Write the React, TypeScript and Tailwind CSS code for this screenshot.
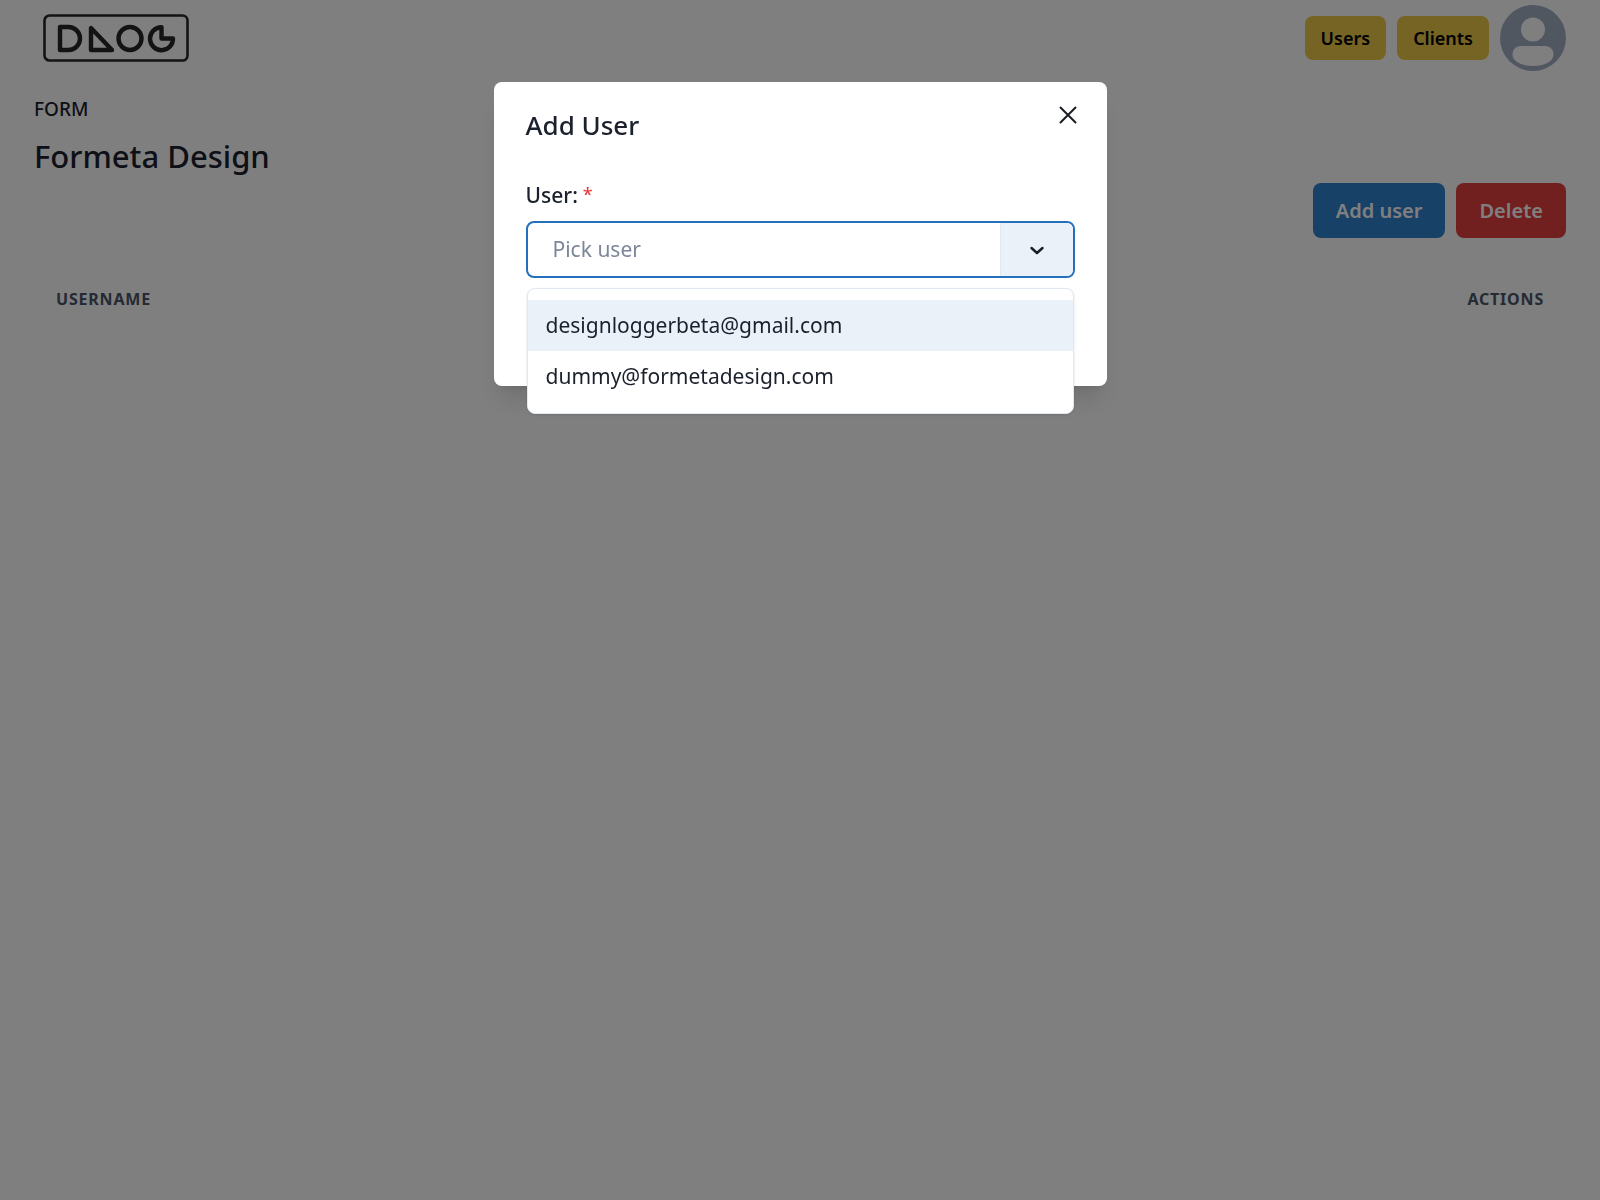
import { useState } from "react";

const users = ["designloggerbeta@gmail.com", "dummy@formetadesign.com"];

function Logo() {
  return (
    <svg viewBox="0 0 146 48" className="h-12 w-[146px]" fill="none" stroke="#262626" aria-hidden="true">
      <rect x="1.5" y="1.5" width="143" height="45" rx="5" strokeWidth="2.6" />
      <g strokeWidth="4.4" strokeLinejoin="round">
        <path d="M17 13H25.5A11.500 11.500 0 0 1 25.5 36H17Z" />
        <path d="M48 14V36H69Z" />
        <circle cx="87" cy="24.500" r="11.500" />
        <path d="M118.500 13.200A11.500 11.500 0 1 0 130 24.500H118.500Z" />
      </g>
    </svg>
  );
}

function Avatar() {
  return (
    <button type="button" aria-label="Account" className="size-[66px] rounded-full">
      <svg viewBox="0 0 66 66" className="size-full" aria-hidden="true">
        <circle cx="33" cy="33" r="33" fill="#a0aec0" />
        <circle cx="33" cy="24.500" r="12" fill="#fff" />
        <path
          d="M21 41H45C50 41 53.500 44.500 53.500 49.500C53.500 56.500 44 61 33 61S12.500 56.500 12.500 49.500C12.500 44.500 16 41 21 41Z"
          fill="#fff"
        />
      </svg>
    </button>
  );
}

function Header() {
  return (
    <header className="flex h-[76px] items-center justify-between pr-[34px] pl-[43px]">
      <a href="#home" aria-label="DLOG">
        <Logo />
      </a>
      <nav className="flex items-center gap-[11px]">
        <button type="button" className="h-11 rounded-lg bg-[#ecc94b] px-4 text-[18px] font-semibold text-black">
          Users
        </button>
        <button type="button" className="h-11 rounded-lg bg-[#ecc94b] px-4 text-[18px] font-semibold text-black">
          Clients
        </button>
        <Avatar />
      </nav>
    </header>
  );
}

function UserSelect() {
  const [value, setValue] = useState("");
  return (
    <div className="relative">
      <div className="flex h-[57px] overflow-hidden rounded-lg border-2 border-[#2470bd] bg-white">
        <input
          id="user"
          role="combobox"
          aria-expanded="true"
          aria-controls="user-options"
          value={value}
          onChange={(e) => setValue(e.target.value)}
          placeholder="Pick user"
          className="min-w-0 flex-1 pt-px pl-[25px] text-[21px] outline-none placeholder:text-[#7c8799]"
        />
        <button
          type="button"
          aria-label="Show users"
          className="flex w-[73px] items-center justify-center border-l border-[#e2e8f0] bg-[#ebf1f8]"
        >
          <svg viewBox="0 0 24 24" className="size-6" fill="none" stroke="#1a1d24" strokeWidth="2.4" strokeLinecap="round" strokeLinejoin="round" aria-hidden="true">
            <path d="M6.500 10l5.500 5 5.500-5" />
          </svg>
        </button>
      </div>
      <ul
        id="user-options"
        role="listbox"
        aria-label="Users"
        className="absolute inset-x-px top-full mt-[10px] rounded-lg border border-[#e2e8f0] bg-white py-[11px] shadow-sm"
      >
        {users.map((user, i) => (
          <li
            key={user}
            role="option"
            aria-selected={i === 0}
            onClick={() => setValue(user)}
            className="flex h-[51px] items-center px-[18px] text-[21px] aria-selected:bg-[#ebf1f8]"
          >
            {user}
          </li>
        ))}
      </ul>
    </div>
  );
}

function AddUserDialog() {
  return (
    <div className="fixed inset-0 flex items-start justify-center bg-black/50 px-4 pt-[82px]">
      <section
        role="dialog"
        aria-modal="true"
        aria-labelledby="dialog-title"
        className="relative w-full max-w-[613px] rounded-lg bg-white px-8 pt-6 pb-[108px] shadow-xl"
      >
        <h2 id="dialog-title" className="text-[26px] leading-[38px] font-medium text-[#1a202c]">
          Add User
        </h2>
        <button
          type="button"
          aria-label="Close"
          className="absolute top-[11px] right-[17px] flex size-11 items-center justify-center"
        >
          <svg viewBox="0 0 18 18" className="size-[18px]" fill="none" stroke="#1a1d24" strokeWidth="2" strokeLinecap="round" aria-hidden="true">
            <path d="M1.500 1.500l15 15M16.500 1.500l-15 15" />
          </svg>
        </button>
        <label htmlFor="user" className="mt-[34px] mb-[9px] flex gap-[5px] text-[21px] leading-[34px] font-medium">
          User: <span className="text-[18px] leading-8 text-[#e53e3e]">*</span>
        </label>
        <UserSelect />
      </section>
    </div>
  );
}

export default function App() {
  return (
    <div className="min-h-screen bg-white font-['Noto_Sans',sans-serif] text-[#1a202c]">
      <Header />
      <main className="px-[34px] pt-5">
        <p className="text-[19px] leading-[26px] font-medium">FORM</p>
        <h1 className="mt-[10px] text-[31px] leading-12 font-medium">Formeta Design</h1>
        <div className="mt-[3px] flex justify-end gap-[11px]">
          <button type="button" className="h-[55px] rounded-lg bg-[#3182ce] px-[23px] text-[20px] font-semibold text-white">
            Add user
          </button>
          <button type="button" className="h-[55px] rounded-lg bg-[#e53e3e] px-[23px] text-[20px] font-semibold text-white">
            Delete
          </button>
        </div>
        <table className="mt-11 w-full text-[16px] leading-[34px] tracking-wider text-[#4a5568] uppercase">
          <thead>
            <tr>
              <th scope="col" className="px-[22px] text-left font-bold">Username</th>
              <th scope="col" className="px-[22px] text-right font-bold">Actions</th>
            </tr>
          </thead>
        </table>
      </main>
      <AddUserDialog />
    </div>
  );
}
